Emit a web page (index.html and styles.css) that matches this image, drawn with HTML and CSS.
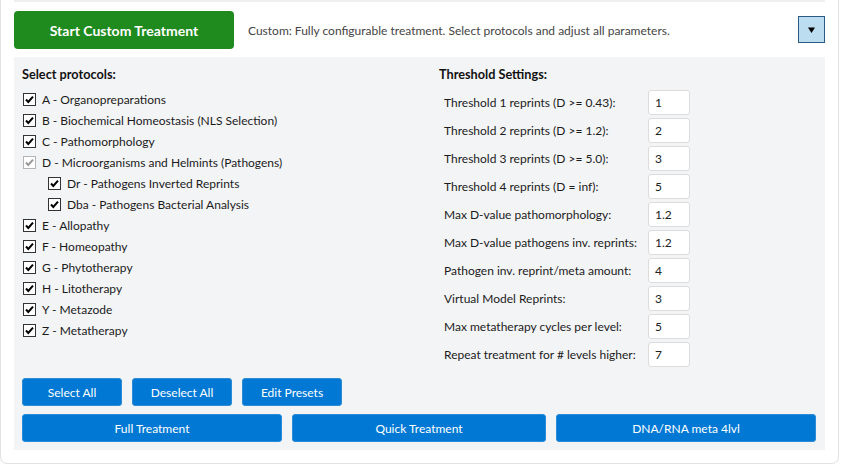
FILE: index.html
```html
<!DOCTYPE html>
<html lang="en">
<head>
<meta charset="utf-8">
<title>Custom Treatment</title>
<link rel="stylesheet" href="styles.css">
</head>
<body>
<div class="card">
  <div class="top-strip"></div>
  <div class="header">
    <button class="start-btn">Start Custom Treatment</button>
    <p class="desc">Custom: Fully configurable treatment. Select protocols and adjust all parameters.</p>
    <button class="toggle-btn" aria-label="Toggle">
      <svg width="9" height="8" viewBox="0 0 9 8"><path d="M1 1.5 L8 1.5 L4.5 7 Z" fill="#000"/></svg>
    </button>
  </div>
  <div class="panel">
    <div class="columns">
      <div class="col-left">
        <h3 class="section-title">Select protocols:</h3>
        <ul class="protocols">
          <li class="check"><span class="box"><svg viewBox="0 0 11 11"><path d="M2 5.5 L4.3 8 L9 2.6"/></svg></span>A - Organopreparations</li>
          <li class="check"><span class="box"><svg viewBox="0 0 11 11"><path d="M2 5.5 L4.3 8 L9 2.6"/></svg></span>B - Biochemical Homeostasis (NLS Selection)</li>
          <li class="check"><span class="box"><svg viewBox="0 0 11 11"><path d="M2 5.5 L4.3 8 L9 2.6"/></svg></span>C - Pathomorphology</li>
          <li class="check disabled"><span class="box"><svg viewBox="0 0 11 11"><path d="M2 5.5 L4.3 8 L9 2.6"/></svg></span>D - Microorganisms and Helmints (Pathogens)</li>
          <li class="check sub"><span class="box"><svg viewBox="0 0 11 11"><path d="M2 5.5 L4.3 8 L9 2.6"/></svg></span>Dr - Pathogens Inverted Reprints</li>
          <li class="check sub"><span class="box"><svg viewBox="0 0 11 11"><path d="M2 5.5 L4.3 8 L9 2.6"/></svg></span>Dba - Pathogens Bacterial Analysis</li>
          <li class="check"><span class="box"><svg viewBox="0 0 11 11"><path d="M2 5.5 L4.3 8 L9 2.6"/></svg></span>E - Allopathy</li>
          <li class="check"><span class="box"><svg viewBox="0 0 11 11"><path d="M2 5.5 L4.3 8 L9 2.6"/></svg></span>F - Homeopathy</li>
          <li class="check"><span class="box"><svg viewBox="0 0 11 11"><path d="M2 5.5 L4.3 8 L9 2.6"/></svg></span>G - Phytotherapy</li>
          <li class="check"><span class="box"><svg viewBox="0 0 11 11"><path d="M2 5.5 L4.3 8 L9 2.6"/></svg></span>H - Litotherapy</li>
          <li class="check"><span class="box"><svg viewBox="0 0 11 11"><path d="M2 5.5 L4.3 8 L9 2.6"/></svg></span>Y - Metazode</li>
          <li class="check"><span class="box"><svg viewBox="0 0 11 11"><path d="M2 5.5 L4.3 8 L9 2.6"/></svg></span>Z - Metatherapy</li>
        </ul>
      </div>
      <div class="col-right">
        <h3 class="section-title">Threshold Settings:</h3>
        <div class="settings">
          <div class="row"><span class="lbl">Threshold 1 reprints (D &gt;= 0.43):</span><span class="val">1</span></div>
          <div class="row"><span class="lbl">Threshold 2 reprints (D &gt;= 1.2):</span><span class="val">2</span></div>
          <div class="row"><span class="lbl">Threshold 3 reprints (D &gt;= 5.0):</span><span class="val">3</span></div>
          <div class="row"><span class="lbl">Threshold 4 reprints (D = inf):</span><span class="val">5</span></div>
          <div class="row"><span class="lbl">Max D-value pathomorphology:</span><span class="val">1.2</span></div>
          <div class="row"><span class="lbl">Max D-value pathogens inv. reprints:</span><span class="val">1.2</span></div>
          <div class="row"><span class="lbl">Pathogen inv. reprint/meta amount:</span><span class="val">4</span></div>
          <div class="row"><span class="lbl">Virtual Model Reprints:</span><span class="val">3</span></div>
          <div class="row"><span class="lbl">Max metatherapy cycles per level:</span><span class="val">5</span></div>
          <div class="row"><span class="lbl">Repeat treatment for # levels higher:</span><span class="val">7</span></div>
        </div>
      </div>
    </div>
    <div class="btn-row small">
      <button class="blue-btn">Select All</button>
      <button class="blue-btn">Deselect All</button>
      <button class="blue-btn">Edit Presets</button>
    </div>
    <div class="btn-row wide">
      <button class="blue-btn">Full Treatment</button>
      <button class="blue-btn">Quick Treatment</button>
      <button class="blue-btn">DNA/RNA meta 4lvl</button>
    </div>
  </div>
</div>
</body>
</html>
```
FILE: styles.css
```css
* { box-sizing: border-box; }
html, body { margin: 0; padding: 0; background: #ffffff; }
body {
  font-family: "Segoe UI", Lato, "Open Sans", sans-serif;
  font-size: 12px;
  color: #1b1b1b;
  width: 841px;
  height: 465px;
  overflow: hidden;
}
button { font-family: inherit; cursor: pointer; }

.card {
  width: 839px;
  height: 464px;
  background: #fff;
  border: 1px solid #e2e2e2;
  border-top: none;
  border-radius: 0 0 7px 7px;
  padding: 0 13px 13px 13px;
}
.top-strip {
  height: 2px;
  background: #efefef;
}
.header {
  height: 55px;
  display: flex;
  align-items: center;
}
.start-btn {
  width: 220px;
  height: 38px;
  margin-top: 1px;
  background: #1f8b1f;
  color: #fff;
  border: none;
  border-radius: 4px;
  font-size: 14px;
  font-weight: 700;
}
.desc {
  margin: 2px 0 0 14px;
  color: #444;
  flex: 1;
}
.toggle-btn {
  width: 27px;
  height: 27px;
  padding: 0;
  background: #bcdcf0;
  border: 1px solid #2c5a86;
  display: flex;
  align-items: center;
  justify-content: center;
}
.toggle-btn svg { display: block; }

.panel {
  background: #f3f4f6;
  padding: 8px 8px 8px 8px;
  height: 393px;
}
.columns {
  display: grid;
  grid-template-columns: 417px 1fr;
  height: 313px;
}
.section-title {
  margin: 0;
  font-size: 12.7px;
  font-weight: 700;
  line-height: 18px;
  color: #111;
}
.protocols {
  list-style: none;
  margin: 6px 0 0 0;
  padding: 0;
}
.check {
  display: flex;
  align-items: center;
  height: 21px;
  padding-left: 1px;
  color: #1b1b1b;
  white-space: nowrap;
}
.check.sub { padding-left: 26px; }
.box {
  width: 13px;
  height: 13px;
  border: 1px solid #333;
  background: #fff;
  margin-right: 6px;
  display: flex;
  align-items: center;
  justify-content: center;
  flex: none;
}
.box svg {
  width: 11px;
  height: 11px;
  fill: none;
  stroke: #000;
  stroke-width: 2;
}
.check.disabled .box { border-color: #b5b5b5; }
.check.disabled .box svg { stroke: #9a9a9a; }

.settings {
  margin-top: 7px;
  padding-left: 5px;
}
.row {
  display: flex;
  align-items: center;
  height: 25px;
  margin-bottom: 3px;
}
.lbl { width: 204px; color: #1b1b1b; white-space: nowrap; }
.val {
  width: 42px;
  height: 25px;
  background: #fff;
  border: 1px solid #dcdcdc;
  border-radius: 3px;
  padding-left: 6px;
  display: flex;
  align-items: center;
  color: #222;
}

.btn-row {
  display: grid;
  gap: 10px;
}
.btn-row.small {
  grid-template-columns: 100px 100px 100px;
}
.btn-row.wide {
  grid-template-columns: 260px 254px 260px;
  margin-top: 8px;
}
.blue-btn {
  height: 28px;
  background: #0078d4;
  color: #fff;
  border: 1px solid #2f8bd6;
  border-radius: 3px;
  font-size: 12px;
  padding: 0;
}
```
